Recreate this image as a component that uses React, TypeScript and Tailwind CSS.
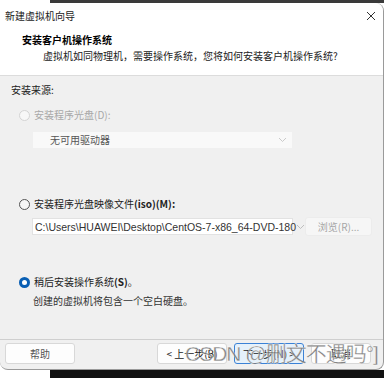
import { FC } from "react";

const font = { fontFamily: '"Noto Sans CJK SC", "Noto Sans", sans-serif' };

const Chevron: FC<{ className?: string }> = ({ className }) => (
  <svg width="9" height="6" viewBox="0 0 9 6" fill="none" className={className}>
    <path d="M1 1l3.5 3.5L8 1" stroke="currentColor" strokeWidth="0.9" />
  </svg>
);

const Radio: FC<{ checked?: boolean; disabled?: boolean }> = ({ checked, disabled }) =>
  checked ? (
    <span className="w-[11px] h-[11px] rounded-full bg-[#0a5fb4] flex items-center justify-center">
      <span className="w-[5px] h-[5px] rounded-full bg-white" />
    </span>
  ) : (
    <span
      className={
        disabled
          ? "w-[11px] h-[11px] rounded-full border border-[#d4d4d4] bg-[#f7f7f7]"
          : "w-[11px] h-[11px] rounded-full border border-[#555] bg-[#f6f6f6]"
      }
    />
  );

const App: FC = () => {
  return (
    <div className="w-[388px] h-[378px] bg-white overflow-hidden text-[10px]" style={font}>
      <div className="ml-[50px] w-[334px] h-[3px] bg-[#3a3a3a]" />
      <div className="relative w-[384px] h-[367px] rounded-b-lg rounded-tr-lg border-r border-b border-[#9a9a9a] bg-[#f0f0f0] flex flex-col">
        {/* header */}
        <div className="h-[73px] bg-white border-b border-[#dcdcdc] rounded-tr-lg">
          <div className="flex items-center justify-between h-[24px] pl-[5px] pr-[7px] pt-[1px]">
            <span className="text-[10px] leading-[16px] text-[#1a1a1a]">新建虚拟机向导</span>
            <svg width="10" height="10" viewBox="0 0 10 10" className="text-[#333]">
              <path d="M1 1l8 8M9 1L1 9" stroke="currentColor" strokeWidth="1" />
            </svg>
          </div>
          <div className="pl-[22px] mt-[5px] text-[10px] leading-[16px] font-bold text-black">
            安装客户机操作系统
          </div>
          <div className="pl-[43px] text-[10px] leading-[16px] text-[#222]">
            虚拟机如同物理机，需要操作系统，您将如何安装客户机操作系统?
          </div>
        </div>

        {/* body */}
        <div className="flex-1 px-[11px] pt-[6px]">
          <div className="leading-[16px] text-[#222]">安装来源:</div>

          <div className="flex items-center gap-[4px] mt-[9px] ml-[8px] h-[16px]">
            <Radio disabled />
            <span className="text-[#a8a8a8] leading-[16px]">安装程序光盘(D):</span>
          </div>
          <div className="mt-[9px] ml-[22px] w-[259px] h-[16px] bg-[#f9f9f9] flex items-center justify-between pl-[17px] pr-[5px]">
            <span className="text-[#555] leading-[16px]">无可用驱动器</span>
            <Chevron className="text-[#c4c4c4]" />
          </div>

          <div className="flex items-center gap-[4px] mt-[48px] ml-[8px] h-[16px]">
            <Radio />
            <span className="text-[#222] leading-[16px]">
              安装程序光盘映像文件<span className="font-semibold">(iso)(M):</span>
            </span>
          </div>
          <div className="flex items-center mt-[5px] ml-[21px] gap-[12px]">
            <div className="w-[261px] h-[17px] bg-white border border-[#e2e2e2] flex items-center justify-between pl-[2px] pr-[5px]">
              <span
                className="text-[#333] text-[10.5px] leading-[16px] whitespace-nowrap"
                style={{ fontFamily: '"Liberation Sans", sans-serif' }}
              >
                C:\Users\HUAWEI\Desktop\CentOS-7-x86_64-DVD-180
              </span>
              <Chevron className="text-[#b8b8b8] shrink-0" />
            </div>
            <div className="w-[69px] h-[19px] rounded-[3px] bg-[#f6f6f6] border border-[#ececec] flex items-center justify-center text-[#a6a6a6] text-[10px] leading-[16px]">
              浏览(R)...
            </div>
          </div>

          <div className="flex items-center gap-[4px] mt-[38px] ml-[8px] h-[16px]">
            <Radio checked />
            <span className="text-[#222] leading-[16px]">
              稍后安装操作系统<span className="font-semibold">(S)</span>。
            </span>
          </div>
          <div className="ml-[22px] mt-[3px] text-[#333] leading-[16px]">
            创建的虚拟机将包含一个空白硬盘。
          </div>
        </div>

        {/* footer */}
        <div className="relative h-[30px] border-t border-[#cfcfcf] flex items-center px-[5px] pb-[3px]">
          <button className="w-[70px] h-[21px] rounded-[3px] bg-[#fdfdfd] border border-[#d8d8d8] text-[#555] text-[10px]">
            帮助
          </button>
          <div className="ml-auto flex gap-[7px] pr-[7px]">
            <button className="w-[70px] h-[21px] rounded-[3px] bg-[#fdfdfd] border border-[#d8d8d8] text-[#222] text-[10px]">
              &lt; 上一步(B)
            </button>
            <button className="w-[70px] h-[21px] rounded-[3px] bg-[#e5f1fb] border border-[#3b82d6] text-[#222] text-[10px]">
              下一步(N) &gt;
            </button>
            <button className="w-[60px] h-[21px] rounded-[3px] bg-[#fdfdfd] border border-[#d8d8d8] text-[#222] text-[10px]">
              取消
            </button>
          </div>
          <span
            className="absolute left-[185px] top-[0px] text-[21px] leading-[28px] tracking-[-1px] text-[#6e6e6e]/85 whitespace-nowrap"
            style={{ fontFamily: '"Liberation Sans", "Noto Sans CJK SC", sans-serif', WebkitTextStroke: "0.3px #ffffff" }}
          >
            CSDN @删文不遇吗°]
          </span>
        </div>
      </div>
      <div className="ml-[50px] w-[334px] h-[8px] bg-[#111]" />
    </div>
  );
};

export default App;
